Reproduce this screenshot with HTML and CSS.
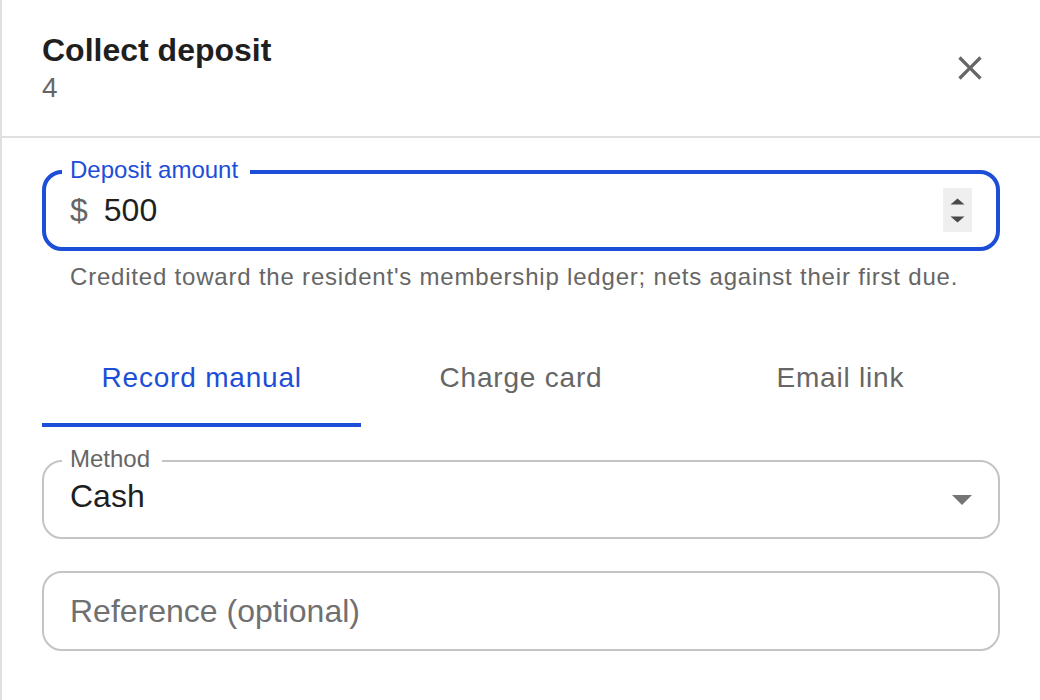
FILE: index.html
```html
<!DOCTYPE html>
<html lang="en">
<head>
<meta charset="utf-8">
<title>Collect deposit</title>
<link rel="stylesheet" href="styles.css">
</head>
<body>
<div class="panel">
  <header class="header">
    <div class="titles">
      <h2 class="title">Collect deposit</h2>
      <div class="subtitle">4</div>
    </div>
    <button class="close" type="button" aria-label="Close">
      <svg viewBox="0 0 24 24" width="40" height="40"><path d="M19 6.41 17.59 5 12 10.59 6.41 5 5 6.41 10.59 12 5 17.59 6.41 19 12 13.41 17.59 19 19 17.59 13.41 12z"/></svg>
    </button>
  </header>
  <main class="content">
    <fieldset class="field field-focused">
      <legend class="field-label">Deposit amount</legend>
      <div class="field-row">
        <span class="adorn">$</span>
        <span class="value">500</span>
        <svg class="spinner" viewBox="0 0 29 44" width="29" height="44"><rect width="29" height="44" fill="#efefef"/><polygon points="7.5,16.5 21.5,16.5 14.5,10.5" fill="#4a4a4a"/><polygon points="7.5,28.5 21.5,28.5 14.5,34.5" fill="#4a4a4a"/></svg>
      </div>
    </fieldset>
    <p class="helper">Credited toward the resident's membership ledger; nets against their first due.</p>

    <nav class="tabs">
      <div class="tab tab-active">Record manual</div>
      <div class="tab">Charge card</div>
      <div class="tab">Email link</div>
    </nav>

    <fieldset class="field field-select">
      <legend class="field-label">Method</legend>
      <div class="field-row">
        <span class="value">Cash</span>
        <svg class="caret" viewBox="0 0 20 10" width="20" height="10"><polygon points="0,0 20,0 10,10"/></svg>
      </div>
    </fieldset>

    <div class="field-plain">
      <span class="placeholder">Reference (optional)</span>
    </div>
  </main>
</div>
</body>
</html>
```
FILE: styles.css
```css
* { box-sizing: border-box; }
html, body { margin: 0; padding: 0; background: #fff; }
body {
  font-family: "Liberation Sans", Arial, Helvetica, sans-serif;
  color: #212121;
}
.panel {
  min-height: 100vh;
  border-left: 2px solid #e0e0e0;
  background: #fff;
}
.header {
  display: flex;
  align-items: center;
  justify-content: space-between;
  padding: 30px 30px 31px 40px;
  border-bottom: 2px solid #e0e0e0;
}
.title {
  margin: 0;
  font-size: 32px;
  line-height: 40px;
  font-weight: 700;
  color: #1f1f1f;
}
.subtitle {
  font-size: 28px;
  line-height: 35px;
  color: #666;
}
.close {
  width: 80px;
  height: 80px;
  margin: -5px 0;
  padding: 20px;
  border: 0;
  background: transparent;
  display: flex;
  align-items: center;
  justify-content: center;
  cursor: pointer;
}
.close svg { fill: #666; display: block; }

.content {
  padding: 20px 40px 0 40px;
}
.field {
  margin: 0;
  min-width: 0;
  border-radius: 20px;
}
.field-focused {
  border: 4px solid #1d4ed8;
  padding: 4px 24px 17px 24px;
}
.field-select {
  border: 2px solid #c4c4c4;
  padding: 1px 26px 21px 26px;
  margin-top: 20px;
}
.field-label {
  font-size: 24px;
  line-height: 24px;
  padding: 0 12px 4px 8px;
  margin-left: -8px;
  color: #666;
}
.field-focused .field-label { color: #1d4ed8; }
.field-row {
  display: flex;
  align-items: center;
  height: 40px;
  font-size: 32px;
  line-height: 40px;
}
.adorn { color: #666; margin-right: 16px; }
.value { flex: 1; color: #1f1f1f; }
.spinner { display: block; flex: none; }
.caret { display: block; flex: none; fill: #757575; margin-top: 7px; }

.helper {
  margin: 6px 0 0 28px;
  font-size: 24px;
  line-height: 40px;
  letter-spacing: 0.8px;
  color: #666;
}

.tabs {
  display: grid;
  grid-template-columns: repeat(3, 1fr);
  margin-top: 34px;
}
.tab {
  text-align: center;
  font-size: 28px;
  line-height: 40px;
  letter-spacing: 0.8px;
  padding: 27px 0 25px;
  border-bottom: 4px solid transparent;
  color: #666;
}
.tab-active {
  color: #1d4ed8;
  border-bottom-color: #1d4ed8;
}

.field-plain {
  margin-top: 32px;
  height: 80px;
  border: 2px solid #c4c4c4;
  border-radius: 20px;
  display: flex;
  align-items: center;
  padding: 0 26px;
}
.placeholder {
  font-size: 32px;
  line-height: 40px;
  color: #707070;
}
```
